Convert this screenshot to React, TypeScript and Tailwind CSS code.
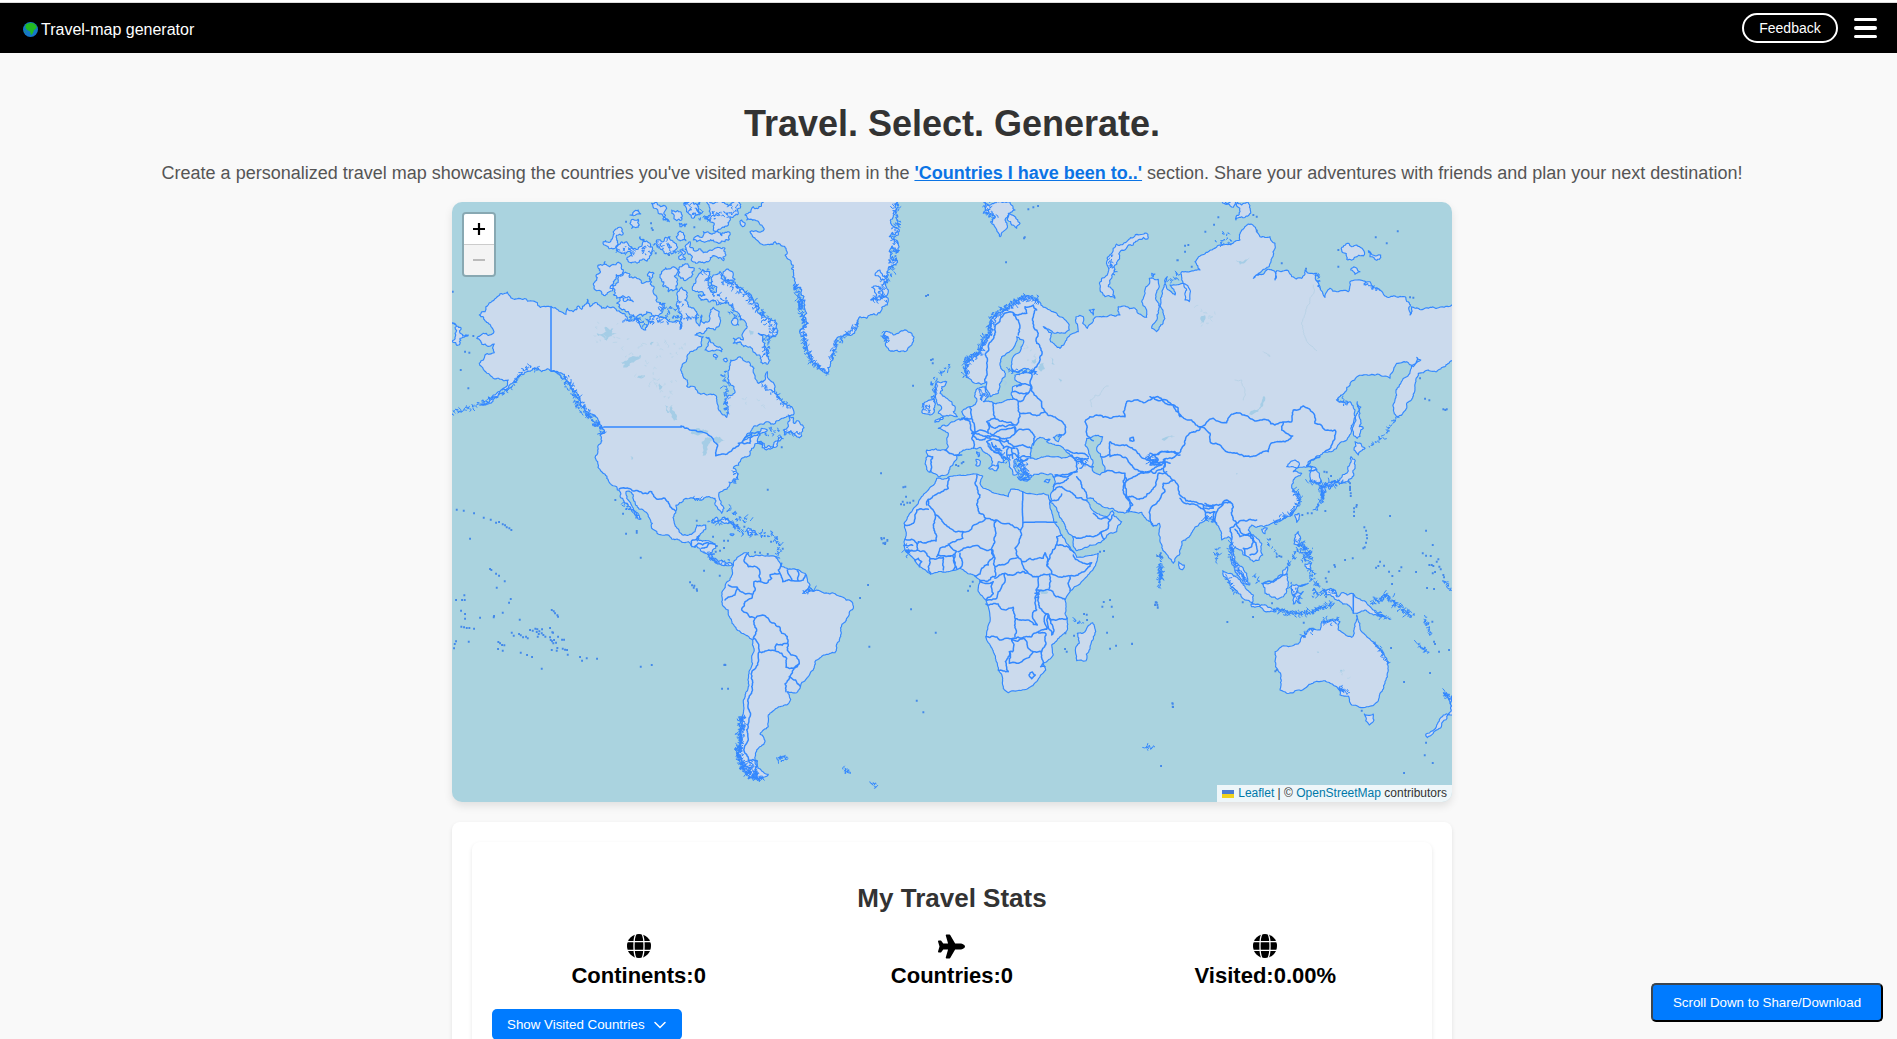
import React from "react";
import { FaPlane } from "react-icons/fa";

/* ---------- map geometry helpers ---------- */

type Frame = [number, number];
// Regional sheets: coordinates inside a sheet are in thirds of a pixel from its corner.
const NA: Frame = [450, 200];
const PA: Frame = [450, 420];
const SA: Frame = [700, 530];
const GL: Frame = [780, 200];
const EU: Frame = [880, 200];
const AF: Frame = [880, 470];
const RU: Frame = [1150, 200];
const OC: Frame = [1120, 440];

type Pt = [number, number];
const at = (f: Frame, s: string): Pt[] =>
  s.trim().split(/\s+/).map((p) => {
    const [x, y] = p.split(",").map(Number);
    return [f[0] + x / 3, f[1] + y / 3];
  });

let seed = 7;
const rnd = () => {
  seed = (seed * 16807) % 2147483647;
  return seed / 2147483647 - 0.5;
};

function roughen(pts: Pt[], k: number, closed: boolean): Pt[] {
  const src = closed ? [...pts, pts[0]] : pts;
  const out: Pt[] = [];
  const split = (a: Pt, b: Pt) => {
    const dx = b[0] - a[0];
    const dy = b[1] - a[1];
    const len = Math.hypot(dx, dy);
    if (len < 2 || len > 60) {
      out.push(b);
      return;
    }
    const r = rnd() * k;
    const m: Pt = [(a[0] + b[0]) / 2 - dy * r, (a[1] + b[1]) / 2 + dx * r];
    split(a, m);
    split(m, b);
  };
  out.push(src[0]);
  for (let i = 1; i < src.length; i++) split(src[i - 1], src[i]);
  return out;
}

const toPath = (pts: Pt[], closed: boolean) =>
  "M" + pts.map(([x, y]) => x.toFixed(1) + " " + y.toFixed(1)).join("L") + (closed ? "Z" : "");

const shape = (f: Frame, s: string, k = 0.5) => toPath(roughen(at(f, s), k, true), true);
const line = (f: Frame, s: string, k = 0.35) => toPath(roughen(at(f, s), k, false), false);
const shapes = (f: Frame, list: string[], k = 0.5) => list.map((s) => shape(f, s, k)).join("");
const lines = (f: Frame, list: string[], k = 0.35) => list.map((s) => line(f, s, k)).join("");

const dots = (f: Frame, s: string) =>
  at(f, s).map(([x, y]) => `M${(x - 0.9).toFixed(1)} ${y.toFixed(1)}h1.9`).join("");

// Small skerries and inlets scattered along a coast.
function skerries(f: Frame, s: string, spread: number, step = 1.3) {
  const pts = at(f, s);
  let d = "";
  for (let i = 1; i < pts.length; i++) {
    const [ax, ay] = pts[i - 1];
    const [bx, by] = pts[i];
    const n = Math.max(1, Math.round(Math.hypot(bx - ax, by - ay) / step));
    for (let j = 0; j < n; j++) {
      const t = j / n;
      const x = ax + (bx - ax) * t + rnd() * spread;
      const y = ay + (by - ay) * t + rnd() * spread;
      d += `M${x.toFixed(1)} ${y.toFixed(1)}l${(rnd() * 4).toFixed(1)} ${(rnd() * 4).toFixed(1)}l${(rnd() * 4).toFixed(1)} ${(rnd() * 4).toFixed(1)}`;
    }
  }
  return d;
}

/* ---------- land ---------- */

const northAmerica = shape(
  NA,
  `88,345 105,335 118,308 140,292 165,280 172,276 180,288 200,297 245,303 303,320 325,330 348,343 352,325 370,335 385,318 395,328 412,298 420,320 440,308 455,325 472,318 500,332 525,342 530,362 560,352 587,390 595,365 600,350 640,352 660,365 688,364 690,388 692,360 688,325 680,310 683,275 695,262 712,278 715,320 735,330 740,355 748,378 755,345 762,370 775,365 780,340 790,322 808,335 810,370 795,390 770,385 762,400 735,405 760,410 755,435 735,450 720,455 712,475 700,490 695,515 700,530 712,540 710,558 740,570 770,585 800,592 805,620 820,645 830,652 835,620 828,595 848,585 852,560 835,525 838,500 842,480 870,470 895,485 912,505 915,535 925,550 945,540 952,515 965,545 975,580 990,600 1000,610 1028,625 1030,645 1000,655 950,665 925,675 905,690 880,722 900,712 935,685 952,690 930,700 922,722 938,735 930,730 905,745 900,765 872,780 866,796 850,805 862,838 840,850 812,875 808,895 822,925 815,940 802,922 795,895 770,890 735,898 700,900 678,915 672,945 675,975 690,998 720,1003 735,995 740,975 767,975 760,995 750,1005 745,1020 770,1022 790,1030 797,1045 782,1060 790,1075 805,1085 825,1086 848,1095 825,1095 800,1090 780,1075 770,1060 750,1045 725,1040 715,1025 690,1022 665,1017 635,1005 605,985 607,970 595,950 570,928 555,905 540,875 528,875 530,895 550,925 573,957 555,945 540,920 520,900 510,875 500,860 480,850 470,835 455,815 443,785 443,750 450,705 462,700 463,690 445,670 412,635 390,600 375,575 355,545 335,520 310,513 275,515 255,505 230,515 205,530 175,565 130,598 90,612 130,585 160,565 175,540 160,542 130,535 100,508 88,490 105,465 133,458 133,432 95,433 80,415 100,400 130,400 125,382 105,362`,
  0.45,
);

const arctic = shapes(NA, [
  "520,220 560,235 580,250 600,240 598,215 612,220 612,260 620,290 645,310 635,340 605,345 590,335 560,350 540,345 525,330 510,325 500,310 550,305 545,300 500,295 495,270 480,265 485,255 505,240",
  "445,195 465,185 485,195 500,190 520,215 490,245 478,275 455,282 432,262 440,240 448,220",
  "460,125 490,95 515,85 520,100 500,120 495,145 470,138",
  "500,150 505,135 530,125 555,145 570,140 570,110 585,125 600,130 603,165 570,180 550,187 530,178 545,165 520,160",
  "540,45 565,30 572,42 550,47",
  "540,70 565,58 568,75 545,85",
  "605,10 625,15 650,25 658,65 640,60 625,40 612,25",
  "665,30 690,35 695,60 680,62",
  "688,70 710,72 705,80 690,80",
  "703,10 730,6 750,6 755,40 740,45 730,55 710,30",
  "760,-5 868,-5 872,20 865,42 840,50 835,75 810,88 790,90 780,65 770,50 780,30",
  "730,120 760,95 790,100 840,98 838,118 825,125 790,120 760,125 740,125",
  "720,125 730,150 760,158 780,150 800,143 825,145 828,165 820,182 780,180 750,185 725,175",
  "620,120 640,125 660,110 675,130 670,160 655,165 640,145 625,140",
  "690,150 705,155 705,180 688,178",
  "683,100 700,98 708,122 685,120",
  "640,210 670,200 685,215 680,245 682,270 655,275 640,260 632,235",
  "695,200 715,195 733,205 725,230 705,242 692,235",
  "745,225 760,210 780,215 775,240 780,270 790,280 800,260 790,225 810,215 820,240 850,245 880,270 905,290 925,320 950,355 980,385 975,410 945,405 925,400 945,430 955,450 955,490 925,465 900,440 870,425 850,430 850,415 880,420 890,385 870,360 860,335 845,320 820,310 800,315 775,305 760,300 750,295 745,285 765,285 738,275 738,245",
  "820,215 850,225 855,238 825,235",
  "768,412 780,420 800,440 815,455 795,452 765,450 775,435",
  "848,360 860,355 866,375 850,375",
  "790,465 803,468 798,478",
  "820,478 830,475 828,486",
  "875,60 885,75 878,80",
  "1015,645 1030,668 1050,670 1055,708 1030,700 1003,705 1000,690 1015,680",
  "925,725 945,742 985,722 1000,716 960,748 945,748",
  "6,368 30,382 55,405 30,415 25,435 6,425",
], 0.7);

const greenland = toPath(
  roughen(
    [
      ...at(NA, "950,0 910,20 885,45 890,60 935,75 940,92 900,95 920,120 940,135 975,125"),
      ...at(GL, "0,132 18,145 30,180 40,215 45,245 42,270 62,262 72,290 52,305 58,328 75,300 80,340 60,350 85,370 60,400 80,430 85,460 100,490 120,505 142,518 152,490 160,460 168,425 190,408 215,405 235,370 240,350 260,355 290,345 322,315 325,300 310,290 300,265 275,262 290,285 272,300 300,300 318,290 325,270 322,240 300,210 285,225 305,240 325,225 325,205 348,195 350,180 332,170 335,140 348,160 348,120 328,110 335,100 355,105 358,90 335,75 340,50 345,20 350,-5"),
    ],
    0.55,
    true,
  ),
  true,
);

const southAmerica = shape(
  SA,
  "100,98 115,80 140,68 150,80 185,75 230,80 245,110 265,118 300,122 315,130 330,165 325,185 350,180 375,190 425,200 455,215 460,235 440,265 425,285 422,320 405,368 375,375 345,395 340,420 320,445 300,475 290,488 262,485 272,508 260,525 230,535 205,555 205,590 180,612 195,635 170,660 165,690 175,715 205,733 185,745 150,740 125,710 115,670 122,600 130,550 130,515 145,460 155,380 158,330 125,310 105,290 85,240 65,215 70,180 90,150 95,115",
  0.3,
);

const africa = shape(
  AF,
  "170,25 190,28 205,22 240,15 290,12 308,18 300,40 310,55 330,62 355,72 385,80 392,58 420,62 460,72 490,70 505,75 510,95 515,125 525,160 545,195 560,220 585,250 590,262 620,258 655,250 650,275 620,320 570,365 555,390 555,430 562,445 562,480 540,500 515,525 520,555 490,580 497,600 470,635 445,655 400,662 385,668 370,655 368,625 355,600 340,545 318,500 330,455 325,410 318,390 295,365 300,330 285,318 262,310 240,295 200,305 152,313 120,290 100,265 75,240 72,215 78,185 72,160 95,125 115,100 140,65 165,40",
  0.2,
);

const eurasia = toPath(
  roughen(
    [
      ...at(EU, "430,290 470,300 500,325 530,340 565,370 568,390 540,400 510,390 490,380 515,400 512,425 540,445 560,420 580,400 595,395 588,350 610,350 608,370 622,385 635,370 650,350 690,345 720,345 715,320 735,318 765,325 800,352 785,305 795,270 808,235 835,238 838,260 836,330 815,385 830,395 850,340 845,290 850,265"),
      ...at(RU, "52,230 50,265 75,285 60,255 75,255 100,250 120,270 118,305 105,300 110,270 95,240 95,215 150,210 135,185 155,165 210,135 270,120 275,90 295,72 320,90 330,110 360,110 375,130 370,165 310,235 350,210 375,215 375,240 380,212 415,212 425,230 455,235 465,210 500,220 510,260 525,292 540,265 560,275 595,275 600,245 615,240 660,245 690,270 705,288 765,290 780,345 785,320 835,325 860,325 905,315 925,315 925,475 905,482 885,500 860,515 835,510 805,520 795,570 770,610 742,652 735,600 738,570 770,530 812,480 800,472 790,500 770,485 740,490 720,525 720,535 690,525 625,528"),
      ...at(RU, "560,600 600,605 615,630 610,670 580,725 550,752 525,755 500,768 475,785 470,798 485,800 480,820 485,845 510,850 508,820 498,805 475,800 440,805 410,800 435,780 448,790 430,815 455,820 430,840 430,870 445,890"),
      ...at(OC, "535,155 540,175 520,215 495,235 470,245 435,258 410,262 395,255 385,270 405,290 425,310 428,345 400,365 385,350 370,345 365,330 345,320 338,335 345,365 370,385 380,400 388,435 370,430 350,400 335,365 332,340 335,305 325,290 305,300 300,270 285,245 260,235 250,245 220,270 185,305 178,345 160,370 145,350 120,290 118,250 100,258 80,240 65,217 -5,217"),
      ...at(AF, "695,115 665,108 640,85 622,84 622,95 650,130 680,140 697,122 702,138 725,155 710,185 670,210 630,225 590,242 582,232 580,205 555,165 530,115 512,98 520,60 520,20 515,12"),
      ...at(EU, "480,820 450,835 425,815 415,795 430,782 445,775 405,778 402,795 415,820 400,825 388,800 380,775 355,760 330,735 320,725 325,740 370,778 372,788 355,785 350,812 335,775 310,755 300,742 275,745 250,750 220,790 205,820 175,830 145,815 140,750 195,750 205,740 205,700 175,685 230,660 255,650 245,635 270,620 290,605 288,570 315,560 325,590 310,605 340,610 400,598 398,560 425,555 405,540 405,525 455,520 470,515 400,515 400,470 430,420 410,410 395,450 365,470 362,500 375,530 355,580 330,590 320,545 285,550 260,530 258,490 300,455 330,400 340,350 380,325"),
    ],
    0.35,
    true,
  ),
  true,
);

const inlandSeas =
  shapes(EU, [
    "450,775 455,740 480,712 510,718 500,725 525,735 545,740 575,768 545,775 500,768 470,778",
    "520,712 545,705 535,725",
    "620,715 640,708 668,710 655,735 650,750 665,775 675,815 660,825 640,815 638,780 625,750 615,735",
  ], 0.3);

const oldWorldIslands =
  shapes(EU, [
    "165,572 172,545 200,545 180,580 215,605 220,635 232,650 165,667 190,655 175,640 185,625 170,600",
    "132,610 160,598 163,630 150,645 128,640",
    "15,395 40,405 60,395 95,400 100,425 60,455 25,445 20,420 10,405",
    "310,0 330,15 390,6 405,30 375,60 360,110 335,70 345,50 310,40",
    "385,40 405,50 420,70 410,85 395,75",
    "660,265 665,235 685,215 695,160 740,125 800,100 803,117 760,135 715,180 695,225 685,260 705,295 675,290",
    "628,330 643,328 640,345",
    "288,778 298,780 296,798 287,795",
    "326,805 352,795 348,812",
    "290,755 298,758 295,770",
    "415,835 450,838 432,842",
    "493,845 510,838 505,848",
    "815,220 825,222 820,230",
  ], 0.5) +
  shape(AF, "638,458 647,485 640,500 618,572 590,572 586,540 598,520 592,490 615,485", 0.3) +
  shapes(RU, [
    "210,0 232,12 250,22 258,0",
    "262,0 275,15 290,5 302,40 258,60 270,35",
    "575,150 595,130 605,140 620,135 640,150 640,168 590,178",
    "655,152 692,165 688,178 660,170",
    "602,210 608,203 630,215 615,223",
    "622,605 630,640 628,680 640,685 622,715 618,660",
    "615,725 645,745 625,765 612,750",
    "603,770 615,800 605,835 575,850 540,860 525,855 570,835 590,820 600,790",
    "512,858 525,862 520,895 515,880",
    "530,855 545,855 538,868",
  ], 0.5) +
  shapes(OC, [
    "308,392 330,400 370,435 400,465 398,490 375,480 345,450 325,420",
    "393,492 430,495 460,508 468,515 430,510 395,500",
    "425,430 450,430 490,390 503,380 500,400 505,425 490,470 455,472 435,460",
    "515,450 515,435 565,430 535,440 530,458 550,455 535,475 542,490 528,480 520,492",
    "525,285 535,275 542,295 538,315 522,312",
    "555,372 575,368 572,390 560,385",
    "524,225 537,220 530,247",
    "425,268 442,264 435,281",
    "176,365 193,375 188,389 178,385",
    "610,450 640,448 650,470 665,458 700,462 740,490 755,505 770,520 795,530 760,525 735,510 715,518 700,520 690,500 650,480 640,470 620,465",
    "733,822 747,826 760,822 762,840 748,855 737,842",
    "988,822 965,855 940,880 922,893 918,882 950,855 970,825",
    "972,758 990,778 1005,760 1005,828 985,822 993,795",
  ], 0.4) +
  shape(
    OC,
    "465,635 495,618 535,612 545,590 570,565 600,570 605,545 640,540 660,545 655,570 695,592 703,580 710,525 720,560 740,590 770,620 800,655 805,690 795,730 780,760 773,785 740,800 695,795 685,768 660,765 660,752 640,735 615,722 555,745 500,760 480,750 484,720 465,665",
    0.28,
  );

const caribbean = shapes(PA, ["785,308 815,298 845,310 868,325 850,322 820,308", "890,330 915,332 918,342 895,345", "840,343 852,343 847,347"], 0.7);

/* ---------- borders ---------- */

const borders =
  "M551 306.500V371M604 427H681.500" +
  lines(NA, ["303,513 318,516 335,535"]) +
  lines(PA, [
    "693,18 705,25 720,30 755,35 775,45 790,58 803,75 797,107 835,98 850,85 865,78 890,50 905,38 925,35 930,45",
    "508,207 525,205 550,213 605,215 625,238 645,235 660,260 676,272",
    "865,70 900,70 905,45",
    "722,375 725,362 740,358 748,348",
    "742,350 742,362",
    "735,382 745,370 758,375 775,368",
    "755,385 770,382 780,370 795,372",
    "775,402 793,402",
  ]) +
  lines(SA, [
    "145,68 132,90 145,110 178,118 182,155 200,160 215,145 210,135 240,130 235,120 245,100",
    "240,130 248,155 275,152 262,120",
    "275,152 295,152 292,122",
    "295,152 310,150 316,135",
    "182,155 162,155 160,190 155,205 135,215 125,240 150,262 165,265 195,257 210,275 240,292 245,310 262,320 265,345 262,360 290,380 298,400 280,415 258,412 260,385 225,362 230,342 262,340",
    "298,400 268,440 300,468",
    "268,440 258,485",
    "165,265 170,300 160,328",
    "163,325 178,365 185,368 200,362 225,362",
    "178,365 175,385 160,420 155,470 145,520 150,560 140,600 145,630 135,670 145,693 172,693 172,733",
    "85,165 112,172 105,195 75,210",
    "112,172 130,188 158,192",
  ]) +
  lines(AF, [
    "205,22 205,55 165,75 145,88 140,105",
    "145,118 110,120 105,140 100,160 75,165",
    "145,88 145,105 165,135 250,185 318,145",
    "165,135 160,165 168,213 115,215 112,222",
    "250,185 248,205 225,215 205,225 180,235 170,260",
    "290,15 285,40 300,75 298,130 318,145 350,150 422,180",
    "235,245 250,235 260,232 335,238",
    "350,150 348,190 335,235",
    "422,180 418,210 405,235 415,262 380,280 345,290",
    "335,238 342,260 325,285 305,295 300,312 285,318",
    "338,240 345,265 345,290 345,320 300,332",
    "415,262 425,275 445,310",
    "345,325 375,310 410,308 445,310 475,320 510,312",
    "425,275 450,265 490,265 495,248 503,265 500,285",
    "503,285 510,255 528,225 530,200 545,195",
    "528,225 560,228 582,248",
    "580,255 600,275 635,278 600,310 570,318",
    "500,285 515,312 545,322 570,318 570,362",
    "510,312 508,355",
    "508,360 555,388",
    "470,360 508,360",
    "475,320 475,340 468,360 465,385 470,420 458,428 462,450 472,465 430,450 405,445",
    "480,360 475,395 490,425 505,432 515,450 562,445",
    "465,370 478,372",
    "465,382 476,380",
    "318,402 355,402 365,418 400,412 405,445 405,500",
    "318,500 400,505 430,502 455,500 475,485 500,478 500,432",
    "505,432 505,470 515,495 522,480 512,460 505,440",
    "430,505 445,535 465,545 485,545 498,520 498,492 475,488",
    "395,510 430,505",
    "395,512 398,545 388,545 388,580 410,580 430,570 460,545",
    "388,545 385,605 355,600",
    "485,545 490,575 482,590 495,590",
    "447,615 457,606 466,615 455,626 447,615",
    "300,335 340,335 335,355 340,370 318,388",
    "375,310 365,350 350,385 320,392",
    "75,208 95,208 112,225 112,240 80,240",
    "72,226 98,226",
    "112,240 140,250 150,265 145,290 152,310",
    "105,272 115,265 125,275 118,290",
    "150,265 165,268 190,262 190,300",
    "190,257 218,257 220,300",
    "225,255 230,296",
    "240,250 240,295",
    "205,222 230,245 218,257 190,257 175,255",
    "580,200 600,205 640,200 665,185 685,175 690,150 655,145",
    "655,145 640,130",
    "690,152 697,135",
    "665,185 672,208",
    "520,62 545,50 560,62 620,92",
    "512,95 535,90 545,72",
    "520,50 535,40 565,25",
    "590,20 605,45 620,82",
    "520,20 570,15 592,5",
  ]) +
  lines(AF, ["422,180 428,170 428,65", "428,157 530,157"], 0.04) +
  lines(EU, [
    "315,545 320,490 325,440 345,380 370,345 390,335 415,345 440,340 435,320 460,315 470,330",
    "400,340 415,360 415,405",
    "465,330 460,365 475,400 470,430 485,465 470,500 450,520",
    "455,522 455,560 445,580 425,580 398,575",
    "410,560 430,552 455,560",
    "455,560 470,590 485,605 485,620 495,635",
    "400,595 415,605 430,600 445,580",
    "420,640 460,645 495,635 520,650 555,675 555,700 535,710",
    "340,610 345,655 375,665 410,675 420,640 415,605",
    "270,620 275,655 285,695 325,700 320,665 345,655",
    "320,665 345,685 375,680 405,675",
    "275,700 330,710 360,690 405,680 405,700 380,715 355,710 330,700",
    "405,700 445,688 465,710 460,735",
    "380,715 400,740 455,745",
    "405,680 405,700",
    "410,745 415,775 450,770",
    "245,655 270,665 285,700 275,715 280,745",
    "240,660 262,655 275,655",
    "275,700 290,718 320,712 335,718",
    "320,725 355,720 370,745 385,740 380,760 390,780",
    "335,728 365,752",
    "355,710 370,725 385,722",
    "385,740 405,745",
    "385,765 400,760 415,775",
    "395,748 398,775",
    "195,750 245,765",
    "145,768 158,770 150,815",
    "575,765 590,785 590,815 570,820 525,825",
    "560,750 600,760 625,770",
    "575,770 600,775 625,775",
    "590,785 610,790 640,800",
    "600,775 610,795 600,805",
    "640,722 625,710 620,700 615,665 650,645 690,655 735,650 730,635 740,605 790,608 830,590 850,605 880,615 900,650",
    "665,770 690,765 690,725 740,735 770,755 800,780 820,765 850,755 900,765",
    "690,770 720,765 745,785 790,815",
    "675,815 700,815 735,820 735,860 740,890 750,905 745,935",
    "735,850 760,830 790,820 830,800 850,790",
    "740,895 790,895 815,870 830,840 835,820 860,815",
    "800,780 815,790 850,785 870,790",
    "805,770 820,785 810,795 845,795",
    "820,765 835,780 810,780",
    "750,715 760,712 762,722 750,722 750,715",
  ]) +
  lines(RU, [
    "0,590 20,600 60,608 95,650 125,660 155,680 115,705 105,730 85,760 40,780 45,800",
    "0,760 40,755 85,760",
    "155,680 190,655 230,668 250,642 300,655 330,660 375,675 425,665 430,630 460,618 485,635 495,670 525,690 555,690 545,735 525,755",
    "155,680 180,700 182,728 210,735 230,755 300,770 355,755 360,735 395,725 428,708 395,690 400,670",
    "470,798 485,780 510,770",
    "478,812 500,808",
  ]) +
  lines(OC, [
    "100,258 90,235 95,200 110,190 135,155 130,130 160,120",
    "15,105 20,175 38,195 20,213",
    "75,95 105,100 130,85 150,110 160,120 170,130 175,150 185,170 215,185 250,195 285,195 320,180 340,200 335,225 350,250",
    "135,60 130,85",
    "95,70 110,60 120,72 95,75",
    "180,175 195,190 250,207 252,195",
    "255,190 280,195 280,205 255,205",
    "250,208 258,240",
    "255,215 285,215 280,235 290,250",
    "285,240 290,215 310,190 335,190",
    "350,250 330,265 335,300",
    "350,250 385,240 410,240",
    "350,255 365,280 390,280 410,320 412,335 390,345",
    "345,268 360,290 385,285 400,305 395,320 370,325 375,345",
    "430,432 460,425 500,402",
  ]) +
  "M1353.300 594V613";

/* ---------- islets ---------- */

const fringes =
  skerries(NA, "345,530 365,565 380,600 410,640 445,675 460,700", 7, 0.55) +
  skerries(NA, "6,638 60,625 120,600 175,570 215,525 230,500 270,505", 3) +
  skerries(NA, "820,240 880,275 930,330 975,390 950,420 950,470", 6, 0.8) +
  skerries(NA, "820,520 830,580 825,640", 5) +
  skerries(GL, "45,250 60,300 70,370 75,440 100,490 142,515", 4, 0.7) +
  skerries(GL, "155,480 165,430 200,405 235,365", 3, 1) +
  skerries(GL, "345,10 350,70 345,140 335,200 320,250", 6, 0.9) +
  skerries(GL, "275,295 305,295 310,240", 6, 0.9) +
  skerries(NA, "530,355 590,365 690,355 740,350", 6, 1) +
  skerries(NA, "620,320 660,335 700,310", 7) +
  skerries(NA, "710,10 760,50 830,40 860,20", 9, 1) +
  skerries(NA, "500,140 560,160 640,130 700,160", 9, 1.4) +
  skerries(NA, "760,215 800,290 840,320 860,350", 8, 1.2) +
  skerries(NA, "930,545 970,580 1020,630", 3) +
  skerries(NA, "940,700 975,690 985,710", 6) +
  skerries(NA, "1005,695 1050,700", 3) +
  skerries(PA, "850,150 862,178 840,190", 4) +
  skerries(PA, "730,235 755,238", 3) +
  skerries(PA, "520,250 570,295", 4) +
  skerries(PA, "835,265 860,290 900,310", 5, 1.3) +
  skerries(PA, "785,305 830,302 870,328", 4) +
  skerries(PA, "870,335 930,345 965,342 985,370 985,400 985,415", 3.5, 1.3) +
  skerries(PA, "770,400 805,430 845,425", 4) +
  skerries(SA, "128,560 120,620 115,670 130,715 160,740 185,745", 6, 0.3) +
  skerries(SA, "145,700 165,735", 7, 0.5) +
  skerries(SA, "232,685 262,688", 4, 0.6) +
  skerries(SA, "432,720 450,730", 2.5, 0.7) +
  skerries(SA, "515,758 530,775", 2) +
  skerries(SA, "310,185 345,178", 4, 0.7) +
  skerries(EU, "258,530 260,485 300,455 330,390 345,345 390,315 440,290 475,305", 6, 0.5) +
  skerries(EU, "410,780 430,800 440,825 420,830", 9, 0.35) +
  skerries(EU, "295,575 320,600", 9, 0.8) +
  skerries(EU, "160,545 165,600", 5, 0.7) +
  skerries(EU, "180,520 210,500", 3) +
  skerries(EU, "130,615 160,640", 5, 1.1) +
  skerries(EU, "385,513 470,518", 3, 1) +
  skerries(EU, "340,740 385,785", 3, 1) +
  skerries(EU, "315,10 330,50 350,60", 8, 0.8) +
  skerries(EU, "690,170 700,220", 4, 1) +
  skerries(EU, "10,395 25,430", 6, 0.8) +
  skerries(EU, "590,780 620,790", 5, 1) +
  skerries(EU, "805,775 840,785", 6, 0.7) +
  skerries(AF, "840,288 842,330", 3, 0.4) +
  skerries(AF, "835,255 845,262 840,345 840,358", 3, 1.6) +
  skerries(AF, "78,232 85,255", 4, 0.6) +
  skerries(AF, "585,450 605,462", 2, 1) +
  skerries(RU, "205,130 240,125", 6, 1) +
  skerries(RU, "215,100 240,110", 4, 2) +
  skerries(RU, "60,240 95,230", 6, 1.3) +
  skerries(RU, "500,220 508,260", 4) +
  skerries(RU, "645,250 690,270", 4) +
  skerries(RU, "570,600 590,610", 4, 0.7) +
  skerries(RU, "742,652 700,710 655,745", 1.5, 2) +
  skerries(RU, "480,845 515,850", 4, 0.8) +
  skerries(RU, "515,860 520,895", 4, 0.6) +
  skerries(RU, "525,850 580,850", 4, 0.8) +
  skerries(OC, "605,130 610,170 585,210", 3, 1.2) +
  skerries(OC, "520,150 540,175 515,220 460,245", 3, 0.9) +
  skerries(OC, "255,235 280,240", 6, 0.7) +
  skerries(OC, "335,310 335,360 385,430", 4, 0.7) +
  skerries(OC, "320,410 350,460", 3, 1.3) +
  skerries(OC, "530,315 570,340 555,360", 9, 0.35) +
  skerries(OC, "505,375 530,335", 3, 1.3) +
  skerries(OC, "515,440 535,480", 6, 0.9) +
  skerries(OC, "570,390 590,430 585,470", 6, 1) +
  skerries(OC, "465,512 520,518 570,520 610,500 640,490", 4, 0.6) +
  skerries(OC, "590,460 650,455", 6, 0.9) +
  skerries(OC, "755,490 800,465 830,495 880,530", 4.5, 0.6) +
  skerries(OC, "770,520 810,537", 3, 1) +
  skerries(OC, "915,530 930,590", 4, 1.3) +
  skerries(OC, "893,612 925,638", 3, 0.9) +
  skerries(OC, "605,545 660,542", 4, 0.9) +
  skerries(OC, "655,740 680,765", 5, 0.7) +
  skerries(OC, "545,590 580,565", 3, 1) +
  skerries(OC, "765,610 805,670", 3, 1.2) +
  skerries(OC, "80,920 95,928", 3, 0.6) +
  skerries(OC, "975,758 992,778", 4, 0.7) +
  skerries(OC, "970,420 995,455", 2, 1.3) +
  skerries(OC, "400,405 415,430", 4, 1.5) +
  skerries(OC, "440,300 480,350", 3, 3) +
  skerries(OC, "290,325 290,370", 3, 1.5);

const islets =
  dots(NA, "528,65 603,70 608,90 617,160 657,165 733,82 32,510 55,565 45,455 58,458 70,408 8,275 605,85") +
  dots(PA, "20,269 41,272 72,280 101,293 122,299 138,308 147,306 158,313 165,316 170,322 178,325 184,330 60,356 120,447 124,450 138,461 147,467 164,484 140,503 18,540 36,540 44,540 43,526 45,596 45,582 33,572 182,537 177,548 158,578 132,588 131,592 90,593 209,599 34,620 42,622 50,624 58,624 72,626 18,664 14,672 12,685 56,665 145,666 150,670 156,675 163,676 144,687 158,692 185,638 191,647 207,642 212,646 219,652 228,650 233,655 240,630 248,632 256,626 262,628 260,636 268,634 266,642 275,640 280,645 286,650 263,650 276,628 300,624 307,637 309,638 300,652 302,660 306,664 312,660 324,650 336,659 342,659 318,668 310,670 322,684 305,690 320,692 338,686 345,689 351,690 353,704 212,698 231,705 246,711 390,711 396,722 410,715 441,716 275,746 305,570 311,574 315,580 322,586 324,590 572,740 605,735 823,735 826,735 816,806 834,806 953,209 995,82 496,240 519,281 560,333 560,338 528,341 572,413 762,452 809,467 740,302 789,350 822,362 834,362 800,378 797,395 810,392 822,384 720,487 726,496 733,497 731,503 740,508 741,512 862,315 883,320 963,365 998,386 953,402 930,398 915,397") +
  dots(SA, "504,165 480,204 508,350 74,404 66,476 84,476 544,24 550,40 556,38 562,32 213,35") +
  dots(EU, "432,115 434,112 378,187 138,288 144,285 99,557 153,480 158,478 158,490 445,28 460,22 474,18 893,181 228,795 235,798 245,790 250,786 3,820 70,862 76,860") +
  dots(AF, "63,103 72,104 68,95 82,98 90,98 100,92 78,80 5,208 12,205 22,210 15,222 278,335 270,349 264,362 93,418 167,488 110,692 130,727 671,396 667,410 690,390 695,410 699,440 612,432 620,434 621,450 681,488 582,497 555,537 560,545 690,536 708,527 756,521 877,700 879,711 828,397 825,405 833,412 830,398 660,245 672,243 556,490") +
  dots(RU, "205,52 192,74 166,95 105,137 105,155 115,135 82,181 125,200 310,45 320,50 743,94 677,112 710,130 565,150 565,200 395,190 468,206 780,292 790,293 810,535 825,596 838,601 880,628 886,630 890,628 523,815 543,828 530,817 600,850 600,860 602,880 602,888 600,870 320,92") +
  dots(OC, "710,195 709,200 702,205 702,215 702,228 810,228 616,213 733,262 738,272 740,285 741,295 738,308 734,322 730,325 918,272 938,315 675,360 698,355 643,375 645,380 626,395 780,365 775,378 792,377 768,383 807,395 844,382 838,393 817,408 888,396 816,432 908,340 918,347 932,348 935,375 928,375 940,378 955,358 950,365 938,400 945,396 958,380 962,388 970,405 921,444 942,447 972,412 937,545 942,605 945,612 957,635 987,630 930,699 813,624 852,726 918,908 914,946 938,969 852,999 36,612 322,546 158,791 158,800 123,978 399,531 368,487 107,487 112,495 113,503 105,494 551,548 547,225 563,220 575,220 470,690 466,694 725,812 456,490 120,345 112,348 125,350 122,340 617,415 620,425 618,470 690,145 692,160 686,125 470,350 478,348 484,350 450,298");

/* ---------- lakes ---------- */

const lakes =
  shapes(NA, [
    "440,400 470,395 465,380 480,390 490,385 485,398 500,402 478,410 470,422 460,412 445,408",
    "512,488 530,482 545,470 572,465 560,480 540,490 520,503 525,492",
    "645,615 655,620 658,640 648,632",
    "665,615 675,640 682,660 672,662 662,640",
    "897,390 912,395 910,402 900,408",
    "560,532 585,525 570,535",
    "628,550 638,560 630,572",
    "722,700 745,684 775,692 770,700 740,706",
    "755,725 780,712 790,718 775,735 770,760 758,768",
    "790,715 810,710 825,722 800,735",
    "600,430 612,425 605,436",
  ], 0.5) +
  shapes(PA, ["540,110 550,114 546,120"]) +
  shapes(EU, ["478,490 492,488 495,505 483,515 475,503", "510,470 520,478 525,495 515,492", "535,535 547,540 543,548", "455,480 470,475 462,492", "370,540 380,545 372,560", "845,720 860,710 890,710 862,716"], 0.5) +
  shapes(RU, ["295,643 320,630 335,605 342,588 340,615 325,635 305,645", "258,180 275,185 300,172 285,188 270,195", "35,718 50,710 75,710 45,722", "152,350 165,345 160,368 155,365"], 0.4) +
  shapes(AF, ["477,365 490,358 505,365 495,372"]) +
  shapes(OC, ["660,690 668,692 664,700", "590,635 598,636 594,640", "348,99 354,100 350,104"]);

const ponds =
  skerries(NA, "430,375 520,430 600,470 650,560 680,620", 22, 3) +
  skerries(NA, "620,440 700,440 660,480", 8, 3) +
  skerries(NA, "560,530 640,560", 8, 4) +
  skerries(NA, "850,610 900,600 960,610", 8, 5) +
  skerries(EU, "430,430 470,500", 8, 3) +
  skerries(RU, "150,320 190,350 150,380", 6, 3) +
  skerries(OC, "660,690 690,715", 5, 3);

const rivers =
  lines(RU, ["490,255 492,280 470,325 458,360 465,410 480,435 500,452", "255,540 275,540 285,570 280,600", "340,455 360,470 355,462"]) +
  lines(EU, ["635,620 630,600 645,585 660,585 685,558"]);

function WorldMap() {
  return (
    <svg className="block h-full w-full" viewBox="452 202 1000 600" fill="none" strokeLinejoin="round" strokeLinecap="round">
      <g fill="#cbdaed" stroke="#3388ff" strokeWidth="1.15">
        <path d={northAmerica} />
        <path d={arctic} />
        <path d={greenland} />
        <path d={caribbean} />
        <path d={southAmerica} />
        <path d={eurasia} />
        <path d={africa} />
        <path d={oldWorldIslands} />
        <path d={inlandSeas} fill="#aad3df" />
      </g>
      <path d={lakes} fill="#a5cde6" />
      <path d={ponds} stroke="#b9d4e8" strokeWidth="0.8" />
      <path d={rivers} stroke="#b5d0e4" strokeWidth="0.8" />
      <path d={borders} stroke="#3388ff" strokeWidth="1.5" />
      <path d={fringes} stroke="#3388ff" strokeWidth="1" />
      <path d={islets} stroke="#4389ea" strokeWidth="1.9" strokeLinecap="butt" />
    </svg>
  );
}

/* ---------- icons ---------- */

function Earth() {
  return (
    <svg viewBox="0 0 16 16" className="h-[15px] w-[15px]">
      <circle cx="8" cy="8" r="8" fill="#1577c8" />
      <path d="M3 2.500 8 .8l4 .9 2.800 3L14 7l-2.200 1.500L10.500 12 8.500 14 7.500 10 4.500 8.500 2.500 6z" fill="#22bb22" />
      <path d="M1 9l1.500 1 .5 2z" fill="#22bb22" />
    </svg>
  );
}

function Globe() {
  return (
    <svg viewBox="0 0 24 24" className="h-6 w-6">
      <circle cx="12" cy="12" r="12" fill="#000" />
      <g stroke="#fff" strokeWidth="1.300" fill="none">
        <path d="M0 7.700h24M0 16.300h24" />
        <path d="M9 0C6.300 4 6.300 20 9 24M15 0c2.700 4 2.700 20 0 24" />
      </g>
    </svg>
  );
}

function Stat({ icon, text }: { icon: React.ReactNode; text: string }) {
  return (
    <div className="flex flex-col items-center">
      <div className="flex h-6 items-center">{icon}</div>
      <p className="mt-[5px] text-[22px] leading-[26px] font-bold text-black">{text}</p>
    </div>
  );
}

export default function App() {
  return (
    <div className="h-[1039px] overflow-hidden bg-[#f9f9f9] font-['Liberation_Sans',Arial,sans-serif]">
      <div className="h-[3px] border-b border-[#dcdcdc] bg-white" />
      <header className="flex h-[50px] items-center justify-between bg-black pr-5 pl-[23px] text-white">
        <div className="flex items-center gap-[3px] pt-[3px]">
          <Earth />
          <span className="text-[16px] leading-5">Travel-map generator</span>
        </div>
        <div className="flex items-center gap-4">
          <button className="flex h-[30px] w-24 items-center justify-center rounded-[15px] border-2 border-white text-[14px]">
            Feedback
          </button>
          <div className="flex w-[23px] flex-col gap-[5px]">
            <span className="h-[3.500px] rounded-sm bg-white" />
            <span className="h-[3.500px] rounded-sm bg-white" />
            <span className="h-[3.500px] rounded-sm bg-white" />
          </div>
        </div>
      </header>

      <main className="flex flex-col items-center pl-[7px]">
        <h1 className="mt-[50px] text-[36px] leading-[42px] font-bold text-[#333]">Travel. Select. Generate.</h1>
        <p className="mt-[17px] text-[18px] leading-[22px] whitespace-nowrap text-[#555]">
          Create a personalized travel map showcasing the countries you've visited marking them in the{" "}
          <a className="font-bold text-[#0b74e5] underline">'Countries I have been to..'</a> section. Share your
          adventures with friends and plan your next destination!
        </p>

        <section className="relative mt-[18px] h-[600px] w-[1000px] overflow-hidden rounded-[10px] bg-[#aad3df] shadow-[0_4px_8px_rgba(0,0,0,0.1)]">
          <WorldMap />
          <div className="absolute top-[10px] left-[10px] w-[34px] rounded-[4px] border-2 border-black/20 bg-clip-padding">
            <div className="flex h-[31px] items-center justify-center rounded-t-[2px] border-b border-[#ccc] bg-white pr-px">
              <svg viewBox="0 0 12 12" className="h-3 w-3" stroke="#000" strokeWidth="2.200">
                <path d="M6 0v12M0 6h12" />
              </svg>
            </div>
            <div className="flex h-[30px] items-center justify-center rounded-b-[2px] bg-[#f4f4f4]">
              <span className="h-[1.500px] w-3 bg-[#bbb]" />
            </div>
          </div>
          <div className="absolute right-0 bottom-0 flex h-[17px] items-center bg-white/80 px-[5px] text-[12px] leading-[17px] whitespace-pre text-[#333]">
            <span className="mr-1 flex h-2 w-3 flex-col">
              <span className="h-1 bg-[#4C7BD1]" />
              <span className="h-1 bg-[#F2D21C]" />
            </span>
            <span className="text-[#0078a8]">Leaflet</span>
            <span> | © </span>
            <span className="text-[#0078a8]">OpenStreetMap</span>
            <span> contributors</span>
          </div>
        </section>

        <section className="mt-5 h-[300px] w-[1000px] rounded-[8px] bg-white p-5 shadow-[0_2px_4px_rgba(0,0,0,0.1)]">
          <div className="h-[280px] rounded-[8px] bg-white px-5 pt-[40px] shadow-[0_2px_4px_rgba(0,0,0,0.1)]">
            <h2 className="text-center text-[26px] leading-[32px] font-bold text-[#333]">My Travel Stats</h2>
            <div className="mt-5 grid grid-cols-3 gap-5">
              <Stat icon={<Globe />} text="Continents:0" />
              <Stat icon={<FaPlane size={27} color="#000" />} text="Countries:0" />
              <Stat icon={<Globe />} text="Visited:0.00%" />
            </div>
            <button className="mt-5 flex h-[31px] w-[190px] items-center rounded-[5px] bg-[#007bff] pl-[15px] text-[13.333px] text-white">
              Show Visited Countries
              <svg viewBox="0 0 12 8" className="ml-[9px] h-2 w-3" fill="none" stroke="#fff" strokeWidth="1.500" strokeLinecap="round">
                <path d="M1 1.500 6 6.500 11 1.500" />
              </svg>
            </button>
          </div>
        </section>
      </main>

      <button className="fixed top-[983px] left-[1651px] flex h-[39px] w-[232px] items-center justify-center rounded-[5px] border-2 border-t-[#3c4650] border-r-black border-b-black border-l-[#3c4650] bg-[#007bff] text-[13.333px] text-white">
        Scroll Down to Share/Download
      </button>
    </div>
  );
}
